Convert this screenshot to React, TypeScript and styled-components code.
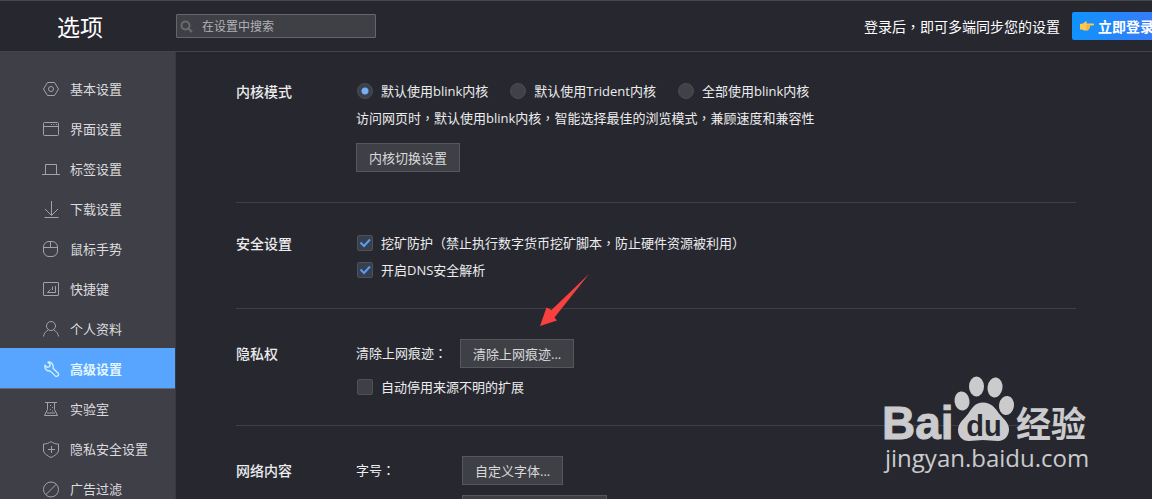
import React, { useState } from "react";
import styled, { createGlobalStyle } from "styled-components";

const GlobalStyle = createGlobalStyle`
  *, *::before, *::after { box-sizing: border-box; }
  body {
    margin: 0;
    background: #27282f;
    color: #ececee;
    font: 13px/27px "Open Sans", "Noto Sans CJK SC", sans-serif;
  }
  button, input, select { font-family: inherit; }
`;

const Page = styled.div`
  position: relative;
  display: flex;
  flex-direction: column;
  height: 100vh;
  overflow: hidden;
`;

const Header = styled.header`
  display: flex;
  flex: none;
  align-items: center;
  height: 52px;
  border-top: 1px solid #48484e;
  border-bottom: 1px solid #43434a;
  overflow: hidden;
`;

const Title = styled.h1`
  flex: none;
  width: 176px;
  margin: 0;
  padding: 2px 0 0 57px;
  font-size: 23px;
  font-weight: 400;
  line-height: 48px;
  color: #fff;
`;

const SearchBox = styled.label`
  display: flex;
  align-items: center;
  gap: 9px;
  width: 200px;
  height: 24px;
  padding-left: 3px;
  border: 1px solid #65666b;
  border-radius: 1px;
  background: #3f4046;
`;

const SearchInput = styled.input`
  flex: 1;
  min-width: 0;
  padding: 0;
  border: 0;
  outline: 0;
  background: transparent;
  color: #ececee;
  font-size: 12px;
  &::placeholder { color: #b2b2b6; opacity: 1; }
`;

const Account = styled.div`
  display: flex;
  align-items: center;
  gap: 12px;
  margin: 0 -14px 0 auto;
  font-size: 14px;
  color: #fff;
  white-space: nowrap;
`;

const LoginButton = styled.button`
  display: flex;
  align-items: center;
  gap: 4px;
  height: 28px;
  padding: 0 12px 0 8px;
  border: 0;
  border-radius: 2px;
  background: linear-gradient(90deg, #0f93fc, #3d78f8);
  color: #fff;
  font-size: 14px;
  font-weight: 700;
`;

const Body = styled.div`
  display: flex;
  flex: 1;
  min-height: 0;
`;

const Sidebar = styled.nav`
  flex: none;
  width: 176px;
  padding-top: 16px;
  border-right: 1px solid #38383f;
  background: #3f3f47;
  overflow: hidden;
`;

const NavItem = styled.a<{ $active?: boolean }>`
  display: flex;
  align-items: center;
  gap: 10px;
  height: 40px;
  padding: 2px 0 0 42px;
  background: ${(p) => (p.$active ? "#57a5ff" : "transparent")};
  box-shadow: ${(p) => (p.$active ? "0 1px 0 #68696f" : "none")};
  color: ${(p) => (p.$active ? "#e2f6ff" : "#dcdcdf")};
  font-weight: ${(p) => (p.$active ? 700 : 400)};
  text-decoration: none;
  svg { color: ${(p) => (p.$active ? "#d2f2ff" : "#a3a3a7")}; }
`;

const Icon = styled.svg`
  flex: none;
  width: 18px;
  height: 18px;
  fill: none;
  stroke: currentColor;
  stroke-width: 1;
`;

const Main = styled.main`
  flex: 1;
  min-width: 0;
  padding: 0 76px 0 60px;
  overflow: hidden;
`;

const Section = styled.section`
  display: flex;
  padding: 27px 0 24px;
  border-bottom: 1px solid #3f4047;
  &:first-child { padding-top: 26px; }
`;

const SectionTitle = styled.h2<{ $tall?: boolean }>`
  flex: none;
  width: 120px;
  margin: 0;
  font-size: 14px;
  font-weight: 500;
  line-height: ${(p) => (p.$tall ? 35 : 27)}px;
`;

const Rows = styled.div`
  flex: 1;
  min-width: 0;
`;

const Row = styled.div`
  display: flex;
  align-items: flex-start;
  gap: 21px;
  height: 27px;
  white-space: nowrap;
`;

const Hint = styled.p`
  margin: 0;
  white-space: nowrap;
`;

const ButtonRow = styled.div<{ $top: number; $bottom: number }>`
  display: flex;
  align-items: center;
  height: 29px;
  margin: ${(p) => p.$top}px 0 ${(p) => p.$bottom}px;
`;

const FieldLabel = styled.label<{ $width: number }>`
  width: ${(p) => p.$width}px;
`;

const Button = styled.button`
  height: 29px;
  padding: 0 12px;
  border: 1px solid #56575d;
  background: #3f4046;
  color: #d9d9dc;
  font-size: 13px;
  white-space: nowrap;
`;

const FontSelect = styled.select`
  width: 145px;
  height: 29px;
  border: 1px solid #56575d;
  background: #3f4046;
  color: #d9d9dc;
  font-size: 13px;
`;

const Option = styled.label`
  display: flex;
  align-items: center;
  gap: 8px;
  height: 26px;
  padding-left: 1px;
  line-height: 26px;
`;

const Radio = styled.input`
  appearance: none;
  width: 16px;
  height: 16px;
  margin: 0;
  border: 1px solid #4c4d53;
  border-radius: 50%;
  background: #414147;
  &:checked {
    background: radial-gradient(circle, #77adf2 0 3px, #3a414c 4px);
  }
`;

const TickFrame = styled.span`
  display: grid;
  width: 16px;
  height: 16px;
  > * { grid-area: 1 / 1; }
`;

const Tick = styled.input`
  appearance: none;
  width: 16px;
  height: 16px;
  margin: 0;
  border: 1px solid #505157;
  border-radius: 2px;
  background: #3f4046;
  &:checked { background: #36404f; }
  & + svg { visibility: hidden; pointer-events: none; }
  &:checked + svg { visibility: visible; }
`;

/* Full-width punctuation, centred in its square */
const Mark = styled.span`
  font-family: "Noto Sans CJK TC", sans-serif;
  line-height: 1;
`;

const Arrow = styled.svg`
  position: absolute;
  left: 540px;
  top: 273px;
  width: 50px;
  height: 54px;
  pointer-events: none;
`;

const Watermark = styled.svg`
  position: absolute;
  right: 60px;
  bottom: 19px;
  width: 210px;
  height: 106px;
  pointer-events: none;
`;

const navItems: { label: string; icon: React.ReactNode; active?: boolean }[] = [
  {
    label: "基本设置",
    icon: (
      <>
        <path d="M5.500 2.500h7l4 6.500-4 6.500h-7L1.500 9z" strokeLinejoin="round" />
        <circle cx="9" cy="9" r="2.500" />
      </>
    ),
  },
  {
    label: "界面设置",
    icon: (
      <>
        <rect x="1.500" y="2.500" width="15" height="13" rx="1" />
        <path d="M1.500 6.500h15M9 4.500h1M11.500 4.500h1M14 4.500h1" />
      </>
    ),
  },
  { label: "标签设置", icon: <path d="M0 14.500h18M3.500 14.500V4.500h11v10" /> },
  { label: "下载设置", icon: <path d="M9.500 1v14M3 9l6.500 6.500L16 9M2.500 17.500h14" /> },
  {
    label: "鼠标手势",
    icon: (
      <>
        <rect x="1.500" y="1.500" width="14" height="15" rx="5.500" />
        <path d="M1.500 7.500h14M8.500 1.500v6" />
      </>
    ),
  },
  {
    label: "快捷键",
    icon: (
      <>
        <rect x="1.500" y="2.500" width="15" height="13" rx=".5" />
        <path d="M13.500 6v6.500H5.500M8.500 9.500l-3 3M10.500 6.500v3.500" />
      </>
    ),
  },
  {
    label: "个人资料",
    icon: (
      <>
        <circle cx="9" cy="6" r="4.500" />
        <path d="M1.500 16.500c.4-3 2-5 4.700-6.500M16.500 16.500c-.4-3-2-5-4.700-6.500" />
      </>
    ),
  },
  {
    label: "高级设置",
    active: true,
    icon: (
      <path
        d="M6 2.200 8.300 4.500 7.500 6.700 5.300 7.500 3 5.200C2.300 8 4.200 11.500 8 10.900l5.300 5c1.800 1.500 4.300-.8 2.800-2.600L11 8.200C12 4.500 9 1.300 6 2.200z"
        strokeWidth="1.300"
        strokeLinejoin="round"
      />
    ),
  },
  {
    label: "实验室",
    icon: (
      <>
        <path d="M3 2.500h12M5.500 2.500v7L2.500 15.500h13l-3-6v-7M5 13h8" />
        <path d="M8 5.500h1M10 7.500h1M8 9.500h1M10 11h1" />
      </>
    ),
  },
  {
    label: "隐私安全设置",
    icon: (
      <path
        d="M9 1.500c2 1.700 4.500 2.500 7.500 2.500v7c-1 3-4 5-7.500 6.500C5.500 16 2.500 14 1.500 11V4C4.500 4 7 3.200 9 1.500zM9.500 6v7M6 9.500h7"
        strokeLinejoin="round"
      />
    ),
  },
  {
    label: "广告过滤",
    icon: (
      <>
        <circle cx="9" cy="9.500" r="7.500" />
        <path d="M14.300 4.200 3.700 14.800" />
      </>
    ),
  },
];

function Sentence({ children }: { children: string }) {
  return (
    <span>
      {children.split(/([，：（）])/).map((part, i) => (i % 2 ? <Mark key={i}>{part}</Mark> : part))}
    </span>
  );
}

function CheckOption({ label, initial }: { label: string; initial: boolean }) {
  const [on, setOn] = useState(initial);
  return (
    <Option>
      <TickFrame>
        <Tick type="checkbox" checked={on} onChange={() => setOn(!on)} />
        <svg width="16" height="16" viewBox="0 0 16 16" fill="none" aria-hidden="true">
          <path d="M3.500 7.500l3.500 3.500 6-6.500" stroke="#5b9cf0" strokeWidth="2" />
        </svg>
      </TickFrame>
      <Sentence>{label}</Sentence>
    </Option>
  );
}

const kernels = ["默认使用blink内核", "默认使用Trident内核", "全部使用blink内核"];

export default function App() {
  const [kernel, setKernel] = useState(0);
  return (
    <Page>
      <GlobalStyle />
      <Header>
        <Title>选项</Title>
        <SearchBox>
          <svg width="13" height="13" viewBox="0 0 13 13" fill="none" stroke="#696a6f" strokeWidth="2" aria-hidden="true">
            <circle cx="5.500" cy="5.500" r="4" />
            <path d="M8.500 8.500l3.500 3.500" />
          </svg>
          <SearchInput type="text" placeholder="在设置中搜索" aria-label="在设置中搜索" />
        </SearchBox>
        <Account>
          <Sentence>登录后，即可多端同步您的设置</Sentence>
          <LoginButton type="button">
            <svg width="14" height="12" viewBox="0 0 14 12" aria-hidden="true">
              <path
                d="M0 4 3 3.500 5.500 1.500q1-.5 1.300.2L6.500 3.500h6.500q1 .2 1 1t-1 1H9.700q.7.600.2 1.300.3.800-.4 1.300.1.900-.9 1.300 0 1-1.200 1.100H4L2 9.500H0z"
                fill="#fdc84b"
              />
              <path d="M6.500 5.500h3M6.500 7.300h3M6.500 9h2" stroke="#d9902a" strokeWidth=".6" />
            </svg>
            立即登录
          </LoginButton>
        </Account>
      </Header>
      <Body>
        <Sidebar>
          {navItems.map((item) => (
            <NavItem key={item.label} href="#" $active={item.active}>
              <Icon viewBox="0 0 18 18" aria-hidden="true">{item.icon}</Icon>
              {item.label}
            </NavItem>
          ))}
        </Sidebar>
        <Main>
          <Section>
            <SectionTitle>内核模式</SectionTitle>
            <Rows>
              <Row>
                {kernels.map((name, i) => (
                  <Option key={name}>
                    <Radio type="radio" name="kernel" checked={kernel === i} onChange={() => setKernel(i)} />
                    {name}
                  </Option>
                ))}
              </Row>
              <Hint>
                <Sentence>访问网页时，默认使用blink内核，智能选择最佳的浏览模式，兼顾速度和兼容性</Sentence>
              </Hint>
              <ButtonRow $top={11} $bottom={6}>
                <Button type="button">内核切换设置</Button>
              </ButtonRow>
            </Rows>
          </Section>
          <Section>
            <SectionTitle>安全设置</SectionTitle>
            <Rows>
              <Row><CheckOption label="挖矿防护（禁止执行数字货币挖矿脚本，防止硬件资源被利用）" initial /></Row>
              <Row><CheckOption label="开启DNS安全解析" initial /></Row>
            </Rows>
          </Section>
          <Section>
            <SectionTitle $tall>隐私权</SectionTitle>
            <Rows>
              <ButtonRow $top={3} $bottom={6}>
                <FieldLabel $width={104} htmlFor="clear"><Sentence>清除上网痕迹：</Sentence></FieldLabel>
                <Button type="button" id="clear">清除上网痕迹...</Button>
              </ButtonRow>
              <Row><CheckOption label="自动停用来源不明的扩展" initial={false} /></Row>
            </Rows>
          </Section>
          <Section>
            <SectionTitle $tall>网络内容</SectionTitle>
            <Rows>
              <ButtonRow $top={3} $bottom={10}>
                <FieldLabel $width={106} htmlFor="font"><Sentence>字号：</Sentence></FieldLabel>
                <Button type="button" id="font">自定义字体...</Button>
              </ButtonRow>
              <ButtonRow $top={0} $bottom={0}>
                <FieldLabel $width={106} htmlFor="size" />
                <FontSelect id="size" aria-label="字号" />
              </ButtonRow>
            </Rows>
          </Section>
        </Main>
      </Body>
      <Arrow viewBox="0 0 50 54" aria-hidden="true">
        <path d="M49 1 14.500 44.500 17 47.500 0 53 6.500 34.500 11.500 37z" fill="#f8403f" />
      </Arrow>
      <Watermark viewBox="0 0 210 106" fill="#cbcbcd">
        <text x="0" y="65" fontFamily="'Liberation Sans', sans-serif" fontWeight="700" fontSize="46" stroke="#cbcbcd">Bai</text>
        <ellipse cx="80" cy="27" rx="7.500" ry="9.500" transform="rotate(-8 80 27)" />
        <ellipse cx="94.500" cy="12.500" rx="7.500" ry="10" />
        <ellipse cx="113" cy="13.500" rx="7.500" ry="10" transform="rotate(8 113 13.5)" />
        <ellipse cx="124.500" cy="31.500" rx="7.500" ry="9.500" transform="rotate(8 124.5 31.5)" />
        <path d="M101 28.500c8 0 12 5 16 11 4 5 10 9 10 16 0 6-4 11.500-11 11.500-6 0-10-1-15-1s-9 1-14 1c-7 0-11-5-11-11 0-7 6-11 10-16 4-6 7-11.500 15-11.500z" />
        <text x="102" y="62" textAnchor="middle" fill="#27282f" fontFamily="'Liberation Sans', sans-serif" fontWeight="700" fontSize="29">du</text>
        <text x="134" y="63" fontFamily="'Noto Sans CJK SC', sans-serif" fontWeight="700" fontSize="35">经验</text>
        <text x="3" y="93" fontFamily="'Open Sans', sans-serif" fontWeight="500" fontSize="24">jingyan.baidu.com</text>
      </Watermark>
    </Page>
  );
}
